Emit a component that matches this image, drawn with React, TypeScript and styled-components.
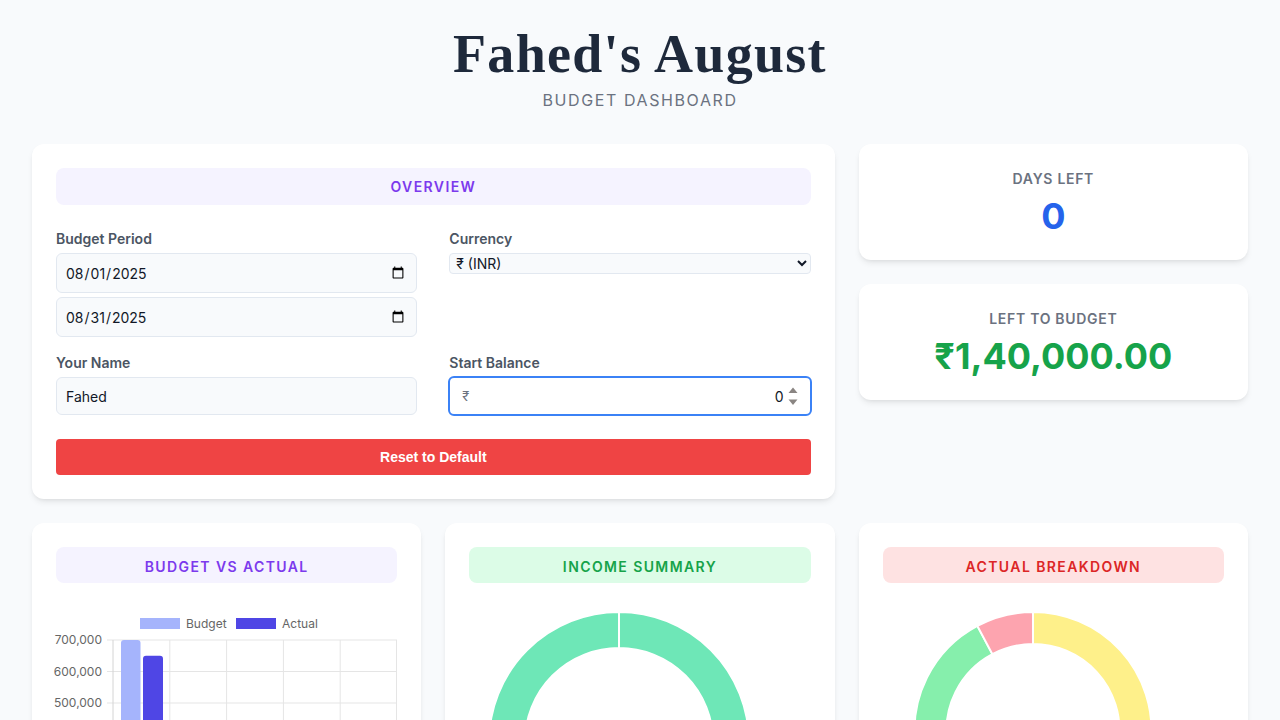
import React from 'react'
import styled, { createGlobalStyle } from 'styled-components'

const GlobalStyle = createGlobalStyle`
  * {
    box-sizing: border-box;
  }
  body {
    margin: 0;
    background: #f8fafc;
    font-family: Inter, 'Noto Sans', sans-serif;
    color: #1e293b;
  }
`

type Tone = 'violet' | 'green' | 'red'

const tones: Record<Tone, { bg: string; fg: string }> = {
  violet: { bg: '#f5f3ff', fg: '#7c3aed' },
  green: { bg: '#dcfce7', fg: '#16a34a' },
  red: { bg: '#fee2e2', fg: '#dc2626' },
}

const Page = styled.div`
  padding: 22px 32px 32px;
`

const Header = styled.header`
  text-align: center;
  margin-bottom: 32px;
`

const Title = styled.h1`
  margin: 0;
  font-family: 'Liberation Serif', Georgia, serif;
  font-weight: 700;
  font-size: 54px;
  line-height: 64px;
  letter-spacing: 1.3px;
  color: #1e293b;
`

const Subtitle = styled.p`
  margin: 2px 0 0;
  font-size: 16px;
  line-height: 24px;
  letter-spacing: 0.1em;
  text-transform: uppercase;
  color: #6b7280;
`

const TopGrid = styled.div`
  display: grid;
  grid-template-columns: repeat(3, 1fr);
  gap: 24px;
  align-items: start;
`

const BottomGrid = styled(TopGrid)`
  margin-top: 24px;
`

const Card = styled.section<{ $span?: number }>`
  grid-column: span ${({ $span }) => $span ?? 1};
  background: #ffffff;
  border-radius: 12px;
  padding: 24px;
  box-shadow: 0 4px 6px -1px rgba(0, 0, 0, 0.08), 0 2px 4px -2px rgba(0, 0, 0, 0.08);
  overflow: hidden;
`

const SideColumn = styled.div`
  display: flex;
  flex-direction: column;
  gap: 24px;
`

const SectionPill = styled.h2<{ $tone: Tone; $tall?: boolean }>`
  margin: 0;
  padding: ${({ $tall }) => ($tall ? '9px 8px 8px' : '10px 8px 6px')};
  border-radius: 8px;
  text-align: center;
  font-size: 14px;
  line-height: 20px;
  font-weight: 600;
  letter-spacing: 0.1em;
  text-transform: uppercase;
  background: ${({ $tone }) => tones[$tone].bg};
  color: ${({ $tone }) => tones[$tone].fg};
`

const FormGrid = styled.div`
  display: grid;
  grid-template-columns: 1fr 1fr;
  column-gap: 32px;
  row-gap: 16px;
  margin-top: 24px;
`

const Field = styled.div`
  display: flex;
  flex-direction: column;
  gap: 4px;
`

const Label = styled.label`
  font-size: 14px;
  line-height: 20px;
  font-weight: 600;
  color: #4b5563;
`

const TextInput = styled.input`
  height: 38px;
  padding: 0 9px;
  font-family: Inter, sans-serif;
  font-size: 14px;
  color: #111827;
  background: #f8fafc;
  border: 1px solid #e2e8f0;
  border-radius: 6px;
  outline: none;
`

const DateInput = styled(TextInput)`
  height: 40px;
  padding-left: 8px;
`

const CurrencySelect = styled.select`
  height: 21px;
  padding: 0 2px;
  font-family: Inter, sans-serif;
  font-size: 14px;
  color: #111827;
  background: #f8fafc;
  border: 1px solid #e2e8f0;
  border-radius: 4px;
`

// focused balance field: a 2px ring that sits 1px outside the field's box
const BalanceBox = styled.div`
  display: flex;
  align-items: center;
  height: 40px;
  margin: -1px;
  padding: 0 12px;
  background: #ffffff;
  border: 2px solid #3b82f6;
  border-radius: 6px;
`

const BalancePrefix = styled.span`
  font-size: 13px;
  color: #6b7280;
`

const BalanceInput = styled.input`
  flex: 1;
  min-width: 0;
  border: none;
  outline: none;
  background: transparent;
  text-align: right;
  font-family: Inter, sans-serif;
  font-size: 14px;
  color: #111827;
`

const Spinner = styled.svg`
  flex: none;
  margin-left: 2px;
`

const ResetButton = styled.button`
  display: block;
  width: 100%;
  height: 36px;
  margin-top: 24px;
  border: none;
  border-radius: 4px;
  background: #ef4444;
  color: #ffffff;
  font-family: 'Liberation Sans', Arial, sans-serif;
  font-weight: 700;
  font-size: 14px;
  cursor: pointer;
`

const StatCard = styled(Card)`
  text-align: center;
  padding-top: 25px;
  padding-bottom: 24px;
`

const StatLabel = styled.div`
  font-size: 14px;
  line-height: 20px;
  font-weight: 600;
  letter-spacing: 0.05em;
  text-transform: uppercase;
  color: #6b7280;
`

const StatValue = styled.div<{ $color: string }>`
  margin-top: 7px;
  font-size: 36px;
  line-height: 40px;
  font-weight: 700;
  color: ${({ $color }) => $color};
`

const ChartArea = styled.div`
  margin-top: 24px;
`

const ChartSvg = styled.svg`
  display: block;
  overflow: visible;
  font-family: Inter, sans-serif;
`

// bar chart: budget vs actual per category
const categories = [
  { budget: 700000, actual: 650000 },
  { budget: 120000, actual: 90000 },
  { budget: 80000, actual: 60000 },
  { budget: 40000, actual: 30000 },
  { budget: 20000, actual: 10000 },
]

const AXIS_X = 57
const TOP_Y = 33
const STEP = 31.5
const COL_W = 56.8
const yFor = (v: number) => TOP_Y + ((700000 - v) / 100000) * STEP

function BudgetChart() {
  const ticks = [700000, 600000, 500000, 400000, 300000, 200000, 100000, 0]
  return (
    <ChartSvg width="341" height="260" viewBox="0 0 341 260">
      <rect x="84" y="11" width="40" height="11" fill="#a5b4fc" />
      <text x="130" y="20.5" fontSize="12" fill="#666">Budget</text>
      <rect x="180" y="11" width="40" height="11" fill="#4f46e5" />
      <text x="226" y="20.5" fontSize="12" fill="#666">Actual</text>
      {ticks.map((t) => (
        <g key={t}>
          <line x1={AXIS_X - 6} x2="341" y1={yFor(t)} y2={yFor(t)} stroke="#e5e5e5" />
          <text x={AXIS_X - 11} y={yFor(t) + 4} fontSize="12" fill="#666" textAnchor="end">
            {t.toLocaleString('en-US')}
          </text>
        </g>
      ))}
      {[0, 1, 2, 3, 4, 5].map((i) => (
        <line
          key={i}
          x1={AXIS_X + i * COL_W - (i === 5 ? 0.5 : 0)}
          x2={AXIS_X + i * COL_W - (i === 5 ? 0.5 : 0)}
          y1={TOP_Y}
          y2="260"
          stroke={i === 0 ? '#d4d4d4' : '#e5e5e5'}
        />
      ))}
      {categories.map((c, i) => {
        const left = AXIS_X + i * COL_W
        return (
          <g key={i}>
            <rect x={left + 8} y={yFor(c.budget)} width="19.5" height={260 - yFor(c.budget) + 4} rx="3" fill="#a5b4fc" />
            <rect x={left + 30} y={yFor(c.actual)} width="20" height={260 - yFor(c.actual) + 4} rx="3" fill="#4f46e5" />
          </g>
        )
      })}
    </ChartSvg>
  )
}

type Slice = { from: number; to: number; color: string }

function arcPath(cx: number, cy: number, inner: number, outer: number, a0: number, a1: number) {
  const pt = (r: number, a: number) => {
    const rad = ((a - 90) * Math.PI) / 180
    return `${cx + r * Math.cos(rad)} ${cy + r * Math.sin(rad)}`
  }
  const large = a1 - a0 > 180 ? 1 : 0
  return `M${pt(outer, a0)} A${outer} ${outer} 0 ${large} 1 ${pt(outer, a1)} L${pt(inner, a1)} A${inner} ${inner} 0 ${large} 0 ${pt(inner, a0)} Z`
}

function Donut({ cy, outer, inner, slices }: { cy: number; outer: number; inner: number; slices: Slice[] }) {
  return (
    <ChartSvg width="300" height="290" viewBox="0 0 300 290">
      {slices.map((s, i) => (
        <path key={i} d={arcPath(150, cy, inner, outer, s.from, s.to)} fill={s.color} stroke="#ffffff" strokeWidth="2" />
      ))}
    </ChartSvg>
  )
}

const incomeSlices: Slice[] = [
  { from: 0, to: 180, color: '#6ee7b7' },
  { from: 180, to: 360, color: '#6ee7b7' },
]

const actualSlices: Slice[] = [
  { from: 0, to: 190, color: '#fef08a' },
  { from: 190, to: 332, color: '#86efac' },
  { from: 332, to: 360, color: '#fda4af' },
]

export default function App() {
  return (
    <Page>
      <GlobalStyle />
      <Header>
        <Title>Fahed's August</Title>
        <Subtitle>Budget Dashboard</Subtitle>
      </Header>

      <TopGrid>
        <Card $span={2}>
          <SectionPill $tone="violet" $tall>Overview</SectionPill>
          <FormGrid>
            <Field>
              <Label>Budget Period</Label>
              <DateInput type="date" defaultValue="2025-08-01" />
              <DateInput type="date" defaultValue="2025-08-31" />
            </Field>
            <Field>
              <Label>Currency</Label>
              <CurrencySelect defaultValue="INR">
                <option value="INR">₹ (INR)</option>
                <option value="USD">$ (USD)</option>
                <option value="EUR">€ (EUR)</option>
              </CurrencySelect>
            </Field>
            <Field>
              <Label>Your Name</Label>
              <TextInput type="text" defaultValue="Fahed" />
            </Field>
            <Field>
              <Label>Start Balance</Label>
              <BalanceBox>
                <BalancePrefix>₹</BalancePrefix>
                <BalanceInput type="text" defaultValue="0" />
                <Spinner width="10" height="19" viewBox="0 0 10 19">
                  <path d="M0.5 6 L5 0.5 L9.5 6 Z" fill="#8a8582" />
                  <path d="M0.5 12.5 L9.5 12.5 L5 18 Z" fill="#8a8582" />
                </Spinner>
              </BalanceBox>
            </Field>
          </FormGrid>
          <ResetButton type="button">Reset to Default</ResetButton>
        </Card>

        <SideColumn>
          <StatCard>
            <StatLabel>Days Left</StatLabel>
            <StatValue $color="#2563eb">0</StatValue>
          </StatCard>
          <StatCard>
            <StatLabel>Left to Budget</StatLabel>
            <StatValue $color="#16a34a">₹1,40,000.00</StatValue>
          </StatCard>
        </SideColumn>
      </TopGrid>

      <BottomGrid>
        <Card>
          <SectionPill $tone="violet">Budget vs Actual</SectionPill>
          <ChartArea>
            <BudgetChart />
          </ChartArea>
        </Card>
        <Card>
          <SectionPill $tone="green">Income Summary</SectionPill>
          <ChartArea>
            <Donut cy={135} outer={130} inner={94} slices={incomeSlices} />
          </ChartArea>
        </Card>
        <Card>
          <SectionPill $tone="red">Actual Breakdown</SectionPill>
          <ChartArea>
            <Donut cy={123.5} outer={118.5} inner={86.5} slices={actualSlices} />
          </ChartArea>
        </Card>
      </BottomGrid>
    </Page>
  )
}
